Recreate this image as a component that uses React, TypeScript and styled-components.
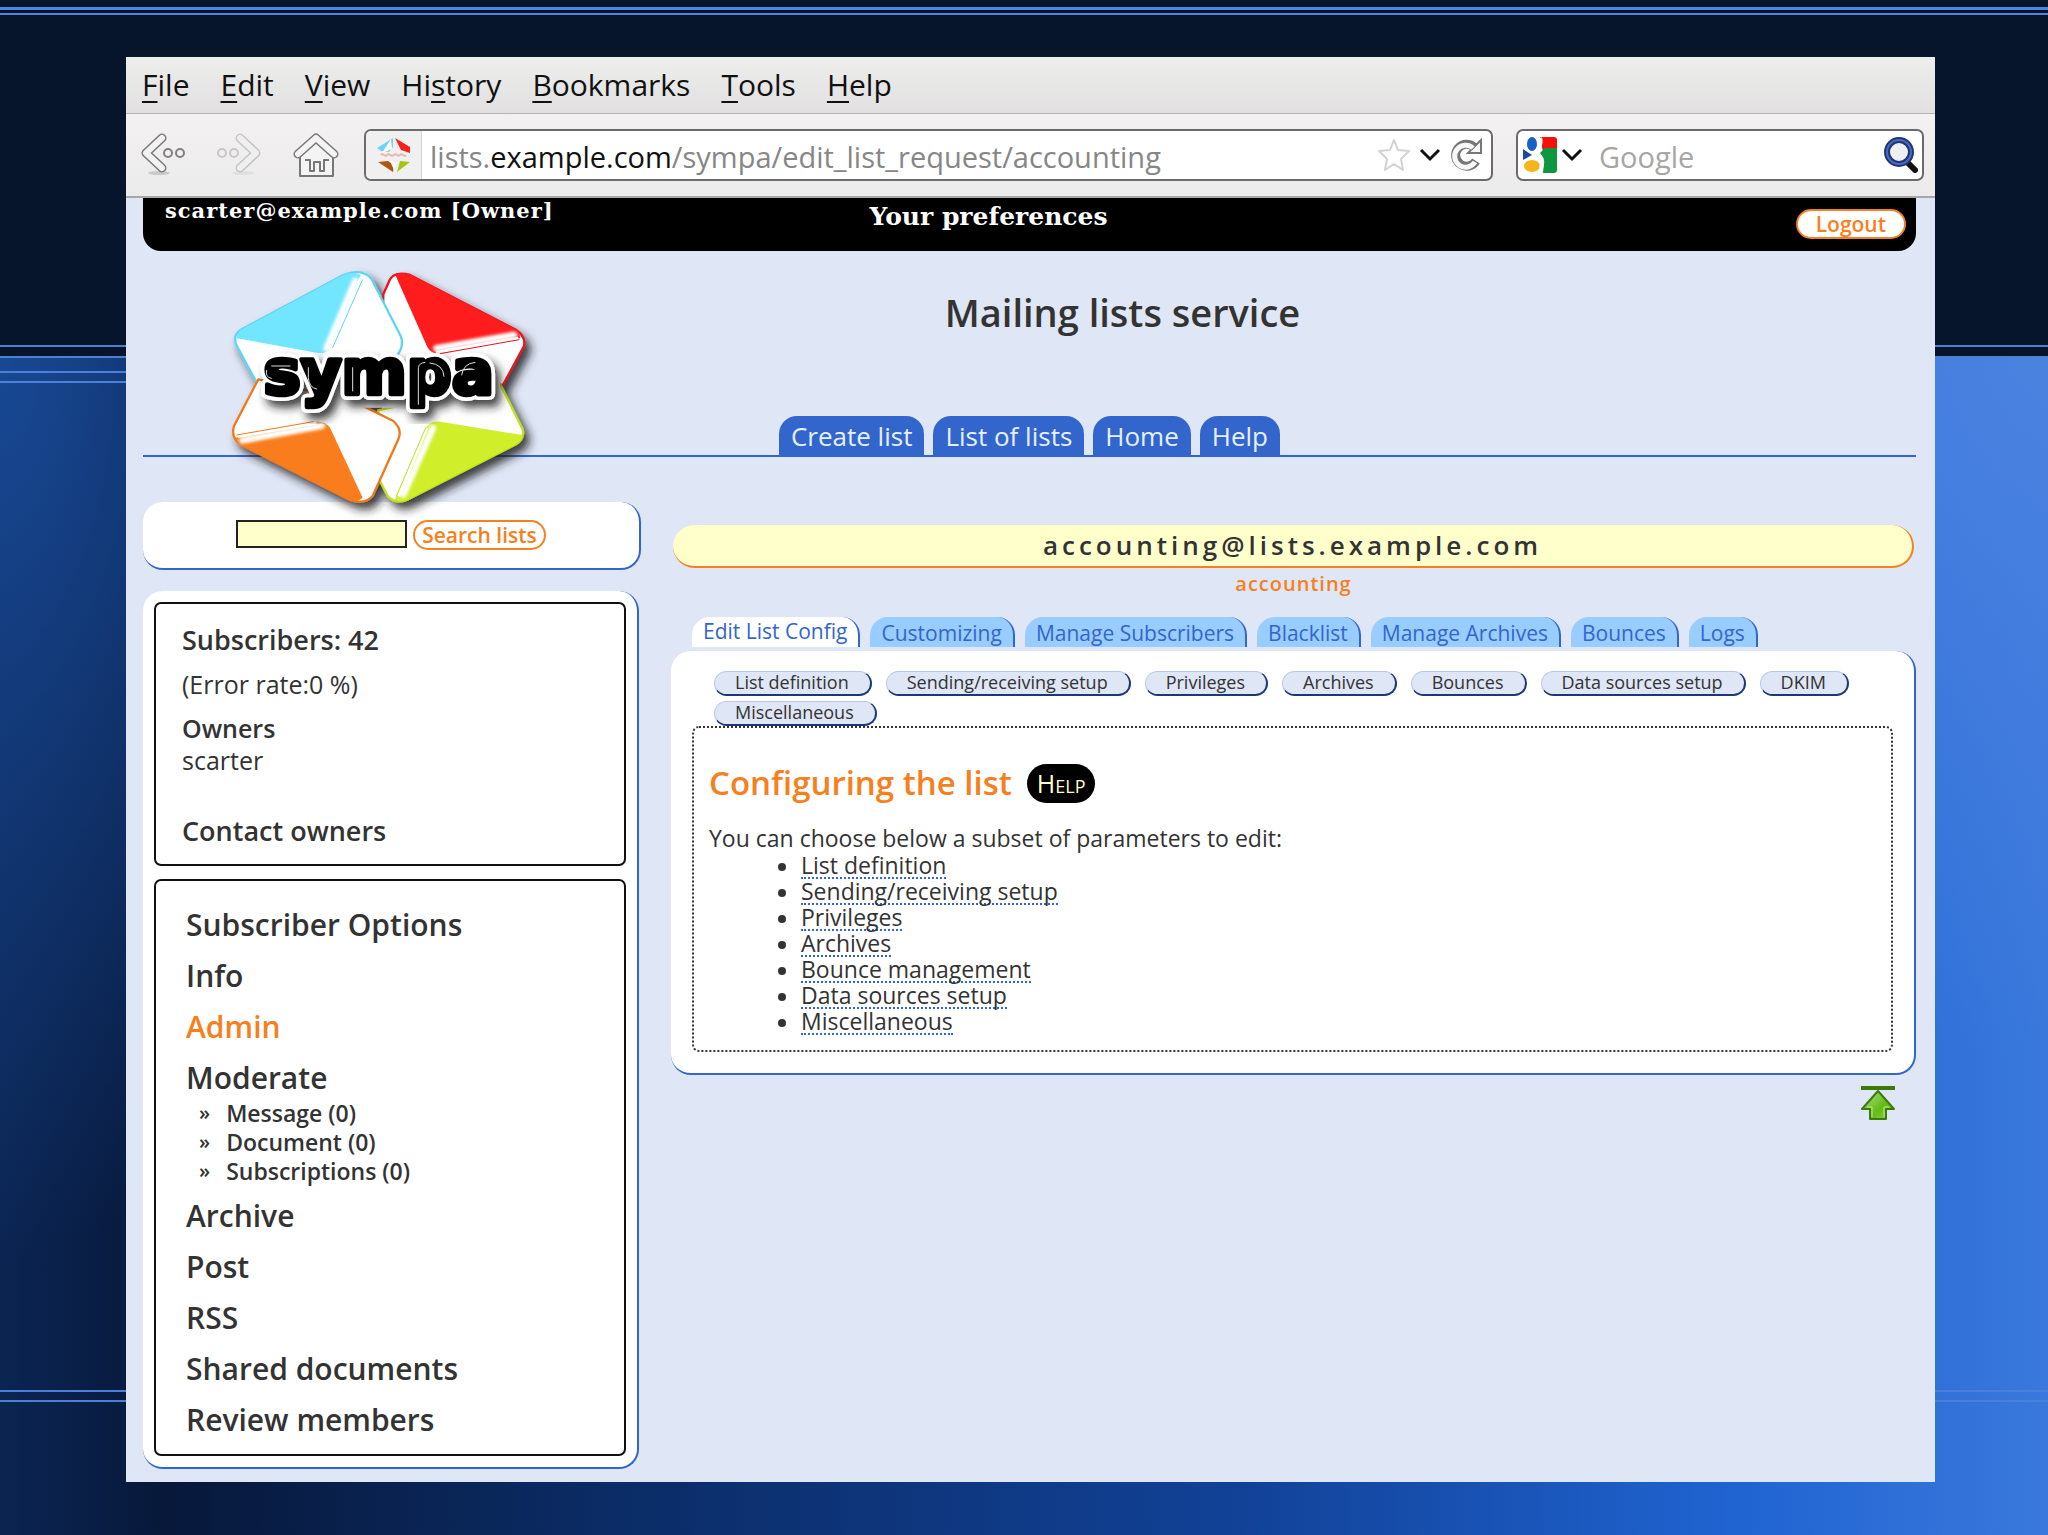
import React from "react";
import styled, { createGlobalStyle } from "styled-components";

const ink = "#333333";
const blue = "#3366cc";
const orange = "#f7801e";
const cream = "#ffffcc";
const pale = "#dfe6f6";
const sans = `"Open Sans", "Noto Sans", sans-serif`;

const GlobalStyle = createGlobalStyle`
  *, *::before, *::after { box-sizing: border-box; }
  body { margin: 0; font-family: ${sans}; color: ${ink}; }
  ul { list-style: none; margin: 0; padding: 0; }
  h1, h2, p { margin: 0; }
  a { color: inherit; text-decoration: none; }
  button, input { font: inherit; }
`;

const Desktop = styled.div`
  min-height: 100vh;
  padding: 57px 113px 52px 126px;
  background:
    linear-gradient(#4d86dc, #4d86dc) left 0 top 7px / 100% 3px no-repeat,
    linear-gradient(#4d86dc, #4d86dc) left 0 top 13px / 100% 2px no-repeat,
    linear-gradient(#4d80d0, #4d80d0) left 0 top 345px / 100% 2px no-repeat,
    linear-gradient(#4d80d0, #4d80d0) left 0 top 356px / 100% 2px no-repeat,
    linear-gradient(#4d80d8, #4d80d8) left 0 top 371px / 30% 2px no-repeat,
    linear-gradient(#4d80d8, #4d80d8) left 0 top 381px / 30% 2px no-repeat,
    linear-gradient(#4a80d8, #4a80d8) left 0 bottom 143px / 100% 2px no-repeat,
    linear-gradient(#4a80d8, #4a80d8) left 0 bottom 133px / 100% 2px no-repeat,
    linear-gradient(#07152c, #07152c) left 0 top 0 / 100% 356px no-repeat,
    radial-gradient(circle at 100% 358px, #4a82e0 0, #4a82e000 700px),
    radial-gradient(ellipse 420px 900px at 0 358px, #184894 0, #18489400 100%),
    linear-gradient(90deg, #0b2552 0, #07183a 8%, #0b2c66 30%, #114196 60%, #2064d2 85%, #3a78dc 100%);
`;

const Window = styled.main`
  display: flex;
  flex-direction: column;
  background: ${pale};
`;

const MenuBar = styled.nav`
  display: flex;
  gap: 31px;
  height: 57px;
  padding: 0 16px;
  align-items: center;
  background: linear-gradient(#edeeec, #e2e0e1);
  border-bottom: 1px solid #b4b2b2;
`;

const MenuButton = styled.button`
  padding: 0;
  border: 0;
  background: none;
  color: #111;
  font-size: 30px;
  line-height: 40px;

  u {
    text-decoration-thickness: 2px;
    text-underline-offset: 5px;
    text-decoration-skip-ink: none;
  }
`;

const Toolbar = styled.div`
  display: flex;
  align-items: center;
  height: 84px;
  padding: 0 11px 0 15px;
  background: linear-gradient(#f3f1f2, #ecebeb);
  border-bottom: 2px solid #a9a7a5;
`;

const NavButtons = styled.div`
  display: flex;
  gap: 32px;
  margin-right: 25px;
`;

const IconButton = styled.button`
  display: flex;
  padding: 0;
  border: 0;
  background: none;
`;

const Field = styled.div`
  display: flex;
  align-items: center;
  height: 52px;
  border: 2px solid #6c6a6a;
  border-radius: 7px;
  background: #fff;
  font-size: 29px;
  overflow: hidden;
`;

const AddressField = styled(Field)`
  flex: 1;
  min-width: 0;
  padding-right: 8px;
  gap: 8px;
`;

const SearchField = styled(Field)`
  width: 408px;
  margin-left: 23px;
  padding: 0 4px 0 5px;
  gap: 4px;
`;

const Favicon = styled.span`
  display: flex;
  align-items: center;
  justify-content: center;
  align-self: stretch;
  width: 56px;
  background: #f1f0f0;
  border-right: 1px solid #d4d2d2;
`;

const Address = styled.label`
  padding-top: 2px;
  color: #868686;
  white-space: nowrap;

  b { color: #111; font-weight: 400; }
`;

const PlainInput = styled.input`
  flex: 1;
  min-width: 0;
  border: 0;
  outline: 0;
  background: none;
  color: ${ink};

  &::placeholder { color: #a6a6a6; opacity: 1; }
`;

const SearchInput = styled(PlainInput)`
  padding: 2px 0 0 12px;
`;

const Page = styled.div`
  display: flex;
  flex-direction: column;
  padding: 0 19px 13px 17px;
`;

const UserBar = styled.div`
  display: grid;
  grid-template-columns: minmax(0, 15fr) auto minmax(0, 17fr);
  height: 53px;
  padding: 0 10px 0 22px;
  border-radius: 0 0 18px 18px;
  background: #000;
  color: #fff;
  font-family: "DejaVu Serif", serif;
  font-weight: 700;
`;

const UserName = styled.span`
  font-size: 21px;
  line-height: 26px;
  letter-spacing: 1px;
`;

const Preferences = styled.a`
  font-size: 25px;
  line-height: 38px;
`;

const PillButton = styled.button`
  height: 30px;
  padding: 0 7px;
  border: 2px solid ${orange};
  border-radius: 15px;
  background: #fff;
  color: ${orange};
  font-family: ${sans};
  font-size: 21px;
  font-weight: 600;
  line-height: 24px;
`;

const LogoutButton = styled(PillButton)`
  justify-self: end;
  margin-top: 11px;
  padding: 0 18px;
`;

const Header = styled.header`
  position: relative;
  display: flex;
  flex-direction: column;
  align-items: center;
  height: 206px;
  border-bottom: 2px solid ${blue};
`;

const Logo = styled.svg`
  position: absolute;
  left: 67px;
  top: 0;
  z-index: 1;
`;

const Title = styled.h1`
  padding: 34px 0 0 186px;
  font-size: 38px;
  font-weight: 600;
  line-height: 54px;
`;

const MainTabs = styled.ul`
  display: flex;
  gap: 9px;
  margin-top: auto;
`;

const MainTab = styled.a`
  display: block;
  padding: 2px 12px 0;
  border-radius: 18px 18px 0 0;
  background: ${blue};
  color: #e6f0ff;
  font-size: 26px;
  line-height: 37px;
`;

const Columns = styled.div`
  display: grid;
  grid-template-columns: minmax(0, 2fr) minmax(0, 5fr);
  gap: 30px;
  padding-top: 45px;
`;

const Sidebar = styled.aside`
  display: flex;
  flex-direction: column;
  gap: 21px;
`;

const SearchBox = styled.form`
  display: flex;
  justify-content: center;
  gap: 6px;
  height: 68px;
  padding-top: 18px;
  border: solid ${blue};
  border-width: 0 2px 2px 0;
  border-radius: 20px;
  background: #fff;
`;

const ListInput = styled.input`
  width: 171px;
  height: 28px;
  border: 2px solid #222;
  background: ${cream};
`;

const SidePanel = styled.div`
  display: flex;
  flex-direction: column;
  gap: 13px;
  margin-right: 2px;
  padding: 11px;
  border: solid ${blue};
  border-width: 0 2px 2px 0;
  border-radius: 20px;
  background: #fff;
`;

const InfoBox = styled.section`
  display: flex;
  flex-direction: column;
  gap: 12px;
  padding: 20px 26px 17px;
  border: 2px solid #111;
  border-radius: 7px;
  font-size: 25px;
  line-height: 32px;
`;

const Strong = styled.strong<{ $large?: boolean }>`
  display: block;
  font-size: ${(p) => (p.$large ? "27px" : "25px")};
  font-weight: 600;
`;

const ContactLink = styled.a`
  margin-top: 27px;
`;

const MenuBox = styled.nav`
  padding: 18px 30px 9px;
  border: 2px solid #111;
  border-radius: 7px;
  font-size: 30px;
  font-weight: 600;
  line-height: 51px;
`;

const MenuLink = styled.a<{ $active?: boolean }>`
  color: ${(p) => (p.$active ? orange : ink)};
`;

const SubMenu = styled.ul`
  margin-top: -4px;
  padding: 0 0 4px 13px;
  font-size: 23px;
  line-height: 29px;

  li { display: flex; gap: 16px; }
  li::before { content: "»"; font-size: 20px; line-height: 27px; }
`;

const Content = styled.section`
  display: flex;
  flex-direction: column;
  padding-top: 23px;
`;

const ListBanner = styled.h2`
  margin: 0 2px;
  border: solid ${orange};
  border-width: 0 2px 2px 0;
  border-radius: 22px;
  background: ${cream};
  font-size: 26px;
  font-weight: 600;
  line-height: 41px;
  letter-spacing: 4px;
  text-align: center;
`;

const Subject = styled.p`
  margin-bottom: 18px;
  color: ${orange};
  font-size: 20px;
  font-weight: 600;
  line-height: 31px;
  letter-spacing: 1px;
  text-align: center;
`;

const AdminTabs = styled.ul`
  display: flex;
  gap: 10px;
  padding: 0 21px;
`;

const AdminTab = styled.a<{ $active?: boolean }>`
  display: block;
  height: 30px;
  padding: 0 11px;
  border-right: 2px solid ${blue};
  border-radius: 18px 18px 0 0;
  background: ${(p) => (p.$active ? "#fff" : "#99ccff")};
  color: ${blue};
  font-size: 21px;
  line-height: ${(p) => (p.$active ? "28px" : "32px")};
  white-space: nowrap;
`;

const Panel = styled.div`
  margin-top: 4px;
  padding: 20px 21px 21px;
  border: solid ${blue};
  border-width: 0 2px 2px 0;
  border-radius: 20px;
  background: #fff;
`;

const Pills = styled.ul`
  display: flex;
  flex-wrap: wrap;
  gap: 5px 14px;
  padding: 0 22px;
`;

const Pill = styled.a`
  display: block;
  height: 25px;
  padding: 0 21px 0 20px;
  border: 1px solid #b9c8e8;
  border-right: 2px solid #1c3878;
  border-bottom: 2px solid #1c3878;
  border-radius: 13px;
  background: #dfe6f6;
  font-size: 18px;
  line-height: 21px;
`;

const ConfigBox = styled.div`
  padding: 35px 15px 15px;
  border: 2px dotted ${ink};
  border-radius: 7px;
  font-size: 23px;
  line-height: 26px;
`;

const ConfigHead = styled.div`
  display: flex;
  align-items: center;
  gap: 15px;
  margin-bottom: 22px;
`;

const ConfigTitle = styled.h2`
  color: ${orange};
  font-size: 33px;
  font-weight: 600;
  line-height: 40px;
`;

const HelpBadge = styled.a`
  padding: 0 10px;
  border-radius: 20px;
  background: #000;
  color: ${cream};
  font-size: 25px;
  font-variant: small-caps;
  line-height: 39px;
`;

const ConfigList = styled.ul`
  padding: 2px 0 0 92px;
  list-style: disc;

  a {
    display: inline-block;
    height: 26px;
    line-height: 24px;
    border-bottom: 2px dotted ${blue};
    vertical-align: top;
  }
`;

const TopLink = styled.a`
  display: flex;
  align-self: flex-end;
  margin: 11px 21px 0 0;
`;

const menu = [
  ["", "F", "ile"],
  ["", "E", "dit"],
  ["", "V", "iew"],
  ["Hi", "s", "tory"],
  ["", "B", "ookmarks"],
  ["", "T", "ools"],
  ["", "H", "elp"],
];
const mainTabs = ["Create list", "List of lists", "Home", "Help"];
const adminTabs = ["Edit List Config", "Customizing", "Manage Subscribers", "Blacklist", "Manage Archives", "Bounces", "Logs"];
const pills = ["List definition", "Sending/receiving setup", "Privileges", "Archives", "Bounces", "Data sources setup", "DKIM", "Miscellaneous"];
const configLinks = ["List definition", "Sending/receiving setup", "Privileges", "Archives", "Bounce management", "Data sources setup", "Miscellaneous"];
const sideLinks = ["Subscriber Options", "Info", "Admin", "Moderate", "Archive", "Post", "RSS", "Shared documents", "Review members"];
const queues = ["Message (0)", "Document (0)", "Subscriptions (0)"];

const BackIcon = ({ flip = false }: { flip?: boolean }) => (
  <svg width="44" height="44" viewBox="0 0 44 44" fill="none" opacity={flip ? 0.35 : 1} transform={flip ? "scale(-1 1)" : undefined}>
    <ellipse cx="18" cy="41" rx="11" ry="2" fill="#c9c9c9" />
    <path d="M21 6 5 21l16 15" stroke="#777" strokeWidth="9" strokeLinecap="round" strokeLinejoin="round" />
    <path d="M21 6 5 21l16 15" stroke="#f2f2f2" strokeWidth="6" strokeLinecap="round" strokeLinejoin="round" />
    <circle cx="27" cy="21" r="4" fill="#f2f2f2" stroke="#808080" strokeWidth="2" />
    <circle cx="39" cy="21" r="4" fill="#f2f2f2" stroke="#808080" strokeWidth="2" />
  </svg>
);

const HomeIcon = () => (
  <svg width="46" height="46" viewBox="0 0 46 46" fill="none" strokeLinejoin="round">
    <path d="M7 20v24h33V20L23 7z" fill="#f4f4f4" stroke="#777" strokeWidth="2" />
    <path d="M12 28h5v11h4v-9h6v9h4V28h5" stroke="#777" strokeWidth="2" />
    <path d="M5 22 23 6l18 16" stroke="#777" strokeWidth="9" strokeLinecap="round" />
    <path d="M5 22 23 6l18 16" stroke="#f4f4f4" strokeWidth="6" strokeLinecap="round" />
  </svg>
);

const FaviconIcon = () => (
  <svg width="36" height="36" viewBox="0 0 36 36">
    <path d="M1 11 17 1v9l-4 5-8-1z" fill="#6fd3f7" />
    <path d="M19 1l15 9v6l-9-3z" fill="#f5211d" />
    <path d="m2 25 10-1 6 4-1 7z" fill="#b4540f" />
    <path d="m34 25-10-1-3 11z" fill="#a3c614" />
    <path d="M15 2 6 16l10-4zM18 33l-4-9 6 2z" fill="#fff" />
    <path d="M5 18c2-3 4 3 6 0s4 3 7 0 4 3 6 0 4 3 6 0" fill="none" stroke="#e2b9b0" strokeWidth="2" />
  </svg>
);

const StarIcon = () => (
  <svg width="34" height="34" viewBox="0 0 34 34">
    <path d="m17 2 4 10 11 1-8 8 2 11-9-6-9 6 2-11-8-8 11-1z" fill="#fff" stroke="#d4d0d4" strokeWidth="2" strokeLinejoin="round" />
  </svg>
);

const ChevronIcon = () => (
  <svg width="22" height="14" viewBox="0 0 22 14">
    <path d="m2 2 9 9 9-9" fill="none" stroke="#111" strokeWidth="3" />
  </svg>
);

const ReloadIcon = () => (
  <svg width="34" height="34" viewBox="0 0 34 34" fill="none">
    <path d="M27 23a11 11 0 1 1-2-14" stroke="#777" strokeWidth="9" />
    <path d="M19 15h13V2l-5 5z" fill="#f8f8f8" stroke="#777" strokeWidth="2" />
    <path d="M26 24a11 11 0 1 1-2-14" stroke="#f8f8f8" strokeWidth="5" />
  </svg>
);

const GoogleIcon = () => (
  <svg width="34" height="36" viewBox="0 0 34 36">
    <path d="M17 0h14a3 3 0 0 1 3 3v11l-14 1z" fill="#f5100c" />
    <path d="M34 11v22a3 3 0 0 1-3 3H20l1-12-7-5 8-8z" fill="#0f9640" />
    <ellipse cx="9" cy="7" rx="5" ry="7" fill="#1561c8" />
    <path d="M0 12l9 6-9 5z" fill="#1c4aa0" />
    <ellipse cx="9" cy="29" rx="8" ry="6" fill="#f6b41b" />
    <path d="M17 1c3 8-4 11-3 14s8 6 4 16" fill="none" stroke="#fff" strokeWidth="4" />
  </svg>
);

const MagnifierIcon = () => (
  <svg width="34" height="36" viewBox="0 0 34 36" fill="none">
    <path d="m23 25 8 8" stroke="#111" strokeWidth="6" strokeLinecap="round" />
    <circle cx="15" cy="15" r="12" fill="#eef0f2" stroke="#1f3577" strokeWidth="6" />
    <circle cx="15" cy="15" r="12" stroke="#4a6cc0" strokeWidth="2" />
  </svg>
);

const TopIcon = () => (
  <svg width="34" height="34" viewBox="0 0 34 34">
    <defs>
      <linearGradient id="leaf" x1="0" y1="0" x2="1" y2="1">
        <stop offset="0" stopColor="#b4e08c" />
        <stop offset="0.6" stopColor="#63bb15" />
        <stop offset="1" stopColor="#8fd650" />
      </linearGradient>
    </defs>
    <path d="M17 5 1 23h8v10h16V23h8z" fill="url(#leaf)" stroke="#3c7a0c" strokeWidth="2" strokeLinejoin="round" />
    <path d="M11 31V21H6M23 31V21h5" fill="none" stroke="#b9e890" strokeWidth="1" />
    <path d="M0 0h34v4H0z" fill="#3c780c" />
  </svg>
);

const SympaLogo = () => (
  <Logo width="350" height="270" viewBox="0 0 1050 810" role="img" aria-label="sympa">
    <defs>
      <filter id="cast" x="-10%" y="-10%" width="130%" height="130%">
        <feDropShadow dx="16" dy="20" stdDeviation="14" floodColor="#222" floodOpacity="0.85" />
      </filter>
      <filter id="soft" x="-50%" y="-50%" width="200%" height="200%">
        <feGaussianBlur stdDeviation="4" />
      </filter>
    </defs>
    <g filter="url(#cast)">
      <g strokeWidth="7" strokeLinejoin="round" fill="#fff">
        <path d="M512 480 520 130 540 85Q556 60 600 72L918 236Q948 256 942 285L880 400 700 470z" stroke="#e8141c" />
        <path d="M505 478 870 398 938 535Q945 562 918 580L595 745Q555 762 533 735L490 650z" stroke="#bfe01f" />
        <path d="M140 395 78 280Q68 250 95 235L400 72Q460 50 485 85L572 255Q584 285 560 315L430 440z" stroke="#5fd5f5" />
        <path d="M145 385 72 525Q62 560 90 580L420 747Q465 762 488 735L565 565Q578 535 550 510L425 448z" stroke="#f0791a" />
      </g>
      <path d="M170 330h700v140H430z" fill="#fff" />
      <path d="M80 262Q80 245 95 235L400 72Q430 60 452 72L365 285Q352 312 320 305z" fill="#73e6ff" />
      <path d="M556 72Q580 62 605 72L918 236Q932 246 930 262L695 307Q665 312 652 288z" fill="#ff1c1e" />
      <path d="M76 560 310 512Q345 508 360 530L458 740Q440 756 415 747L90 580z" fill="#f97d1a" />
      <path d="M936 552Q936 570 918 580L595 745Q570 756 555 746L645 535Q658 510 690 512z" fill="#d0ef2b" />
    </g>
    <g fill="none" stroke="#fff" strokeWidth="20" strokeLinecap="round" filter="url(#soft)">
      <path d="M436 90 350 292" />
      <path d="M680 292 912 252" />
      <path d="M98 568 335 524" />
      <path d="M580 730 668 532" />
    </g>
    <g fill="none" stroke="#fff" strokeWidth="10">
      <path d="M452 82 360 296M678 304 925 262M84 556 320 516M566 736 650 530" />
    </g>
    <g fill="none" strokeWidth="3">
      <path d="M458 85 368 290" stroke="#5fd5f5" />
      <path d="M690 308 928 266" stroke="#e8141c" />
      <path d="M80 552 310 512" stroke="#f0791a" />
      <path d="M558 738 648 528" stroke="#bfe01f" />
    </g>
    <g fontFamily="DejaVu Sans" fontWeight="700" fontSize="188" textAnchor="middle" strokeLinejoin="round">
      <text x="506" y="430" fill="#fff" stroke="#fff" strokeWidth="36" filter="url(#cast)" aria-hidden="true">sympa</text>
      <text x="506" y="430" fill="#000" stroke="#000" strokeWidth="14" aria-hidden="true">sympa</text>
    </g>
    <g fill="none" stroke="#ddd" strokeWidth="3" strokeLinecap="round">
      <path d="M185 345h55M170 358q-6 20 14 24M295 350v30q2 30 25 34M428 350v70M625 460V350q2-14 20-16M660 336q40 4 42 40M755 372q4-34 40-38" />
    </g>
  </Logo>
);

export default function App() {
  return (
    <>
      <GlobalStyle />
      <Desktop>
        <Window>
          <MenuBar aria-label="Browser menu">
            {menu.map(([before, key, after]) => (
              <MenuButton key={key + after} type="button">
                {before}
                <u>{key}</u>
                {after}
              </MenuButton>
            ))}
          </MenuBar>
          <Toolbar>
            <NavButtons>
              <IconButton type="button" aria-label="Back"><BackIcon /></IconButton>
              <IconButton type="button" aria-label="Forward"><BackIcon flip /></IconButton>
              <IconButton type="button" aria-label="Home page"><HomeIcon /></IconButton>
            </NavButtons>
            <AddressField>
              <Favicon><FaviconIcon /></Favicon>
              <Address htmlFor="address">
                lists.<b>example.com</b>/sympa/edit_list_request/accounting
              </Address>
              <PlainInput id="address" type="text" />
              <IconButton type="button" aria-label="Bookmark this page"><StarIcon /></IconButton>
              <IconButton type="button" aria-label="Show history"><ChevronIcon /></IconButton>
              <IconButton type="button" aria-label="Reload"><ReloadIcon /></IconButton>
            </AddressField>
            <SearchField>
              <IconButton type="button" aria-label="Search engine"><GoogleIcon /></IconButton>
              <IconButton type="button" aria-label="Choose search engine"><ChevronIcon /></IconButton>
              <SearchInput type="search" placeholder="Google" aria-label="Search the web" />
              <IconButton type="button" aria-label="Search"><MagnifierIcon /></IconButton>
            </SearchField>
          </Toolbar>

          <Page>
            <UserBar>
              <UserName>scarter@example.com [Owner]</UserName>
              <Preferences href="#preferences">Your preferences</Preferences>
              <LogoutButton type="button">Logout</LogoutButton>
            </UserBar>

            <Header>
              <SympaLogo />
              <Title>Mailing lists service</Title>
              <MainTabs>
                {mainTabs.map((t) => (
                  <li key={t}><MainTab href="#main">{t}</MainTab></li>
                ))}
              </MainTabs>
            </Header>

            <Columns>
              <Sidebar>
                <SearchBox>
                  <ListInput type="text" aria-label="List name" />
                  <PillButton type="button">Search lists</PillButton>
                </SearchBox>
                <SidePanel>
                  <InfoBox>
                    <Strong $large>Subscribers: 42</Strong>
                    <span>(Error rate:0 %)</span>
                    <div>
                      <Strong>Owners</Strong>
                      scarter
                    </div>
                    <ContactLink href="#contact"><Strong $large>Contact owners</Strong></ContactLink>
                  </InfoBox>
                  <MenuBox aria-label="List menu">
                    <ul>
                      {sideLinks.map((t) => (
                        <li key={t}>
                          <MenuLink href="#list" $active={t === "Admin"}>{t}</MenuLink>
                          {t === "Moderate" && (
                            <SubMenu>
                              {queues.map((q) => (
                                <li key={q}><MenuLink href="#queue">{q}</MenuLink></li>
                              ))}
                            </SubMenu>
                          )}
                        </li>
                      ))}
                    </ul>
                  </MenuBox>
                </SidePanel>
              </Sidebar>

              <Content>
                <ListBanner>accounting@lists.example.com</ListBanner>
                <Subject>accounting</Subject>
                <AdminTabs>
                  {adminTabs.map((t, i) => (
                    <li key={t}><AdminTab href="#admin" $active={i === 0}>{t}</AdminTab></li>
                  ))}
                </AdminTabs>
                <Panel>
                  <Pills>
                    {pills.map((t) => (
                      <li key={t}><Pill href="#section">{t}</Pill></li>
                    ))}
                  </Pills>
                  <ConfigBox>
                    <ConfigHead>
                      <ConfigTitle>Configuring the list</ConfigTitle>
                      <HelpBadge href="#help">Help</HelpBadge>
                    </ConfigHead>
                    <p>You can choose below a subset of parameters to edit:</p>
                    <ConfigList>
                      {configLinks.map((t) => (
                        <li key={t}><a href="#config">{t}</a></li>
                      ))}
                    </ConfigList>
                  </ConfigBox>
                </Panel>
                <TopLink href="#top" aria-label="Top of page"><TopIcon /></TopLink>
              </Content>
            </Columns>
          </Page>
        </Window>
      </Desktop>
    </>
  );
}
